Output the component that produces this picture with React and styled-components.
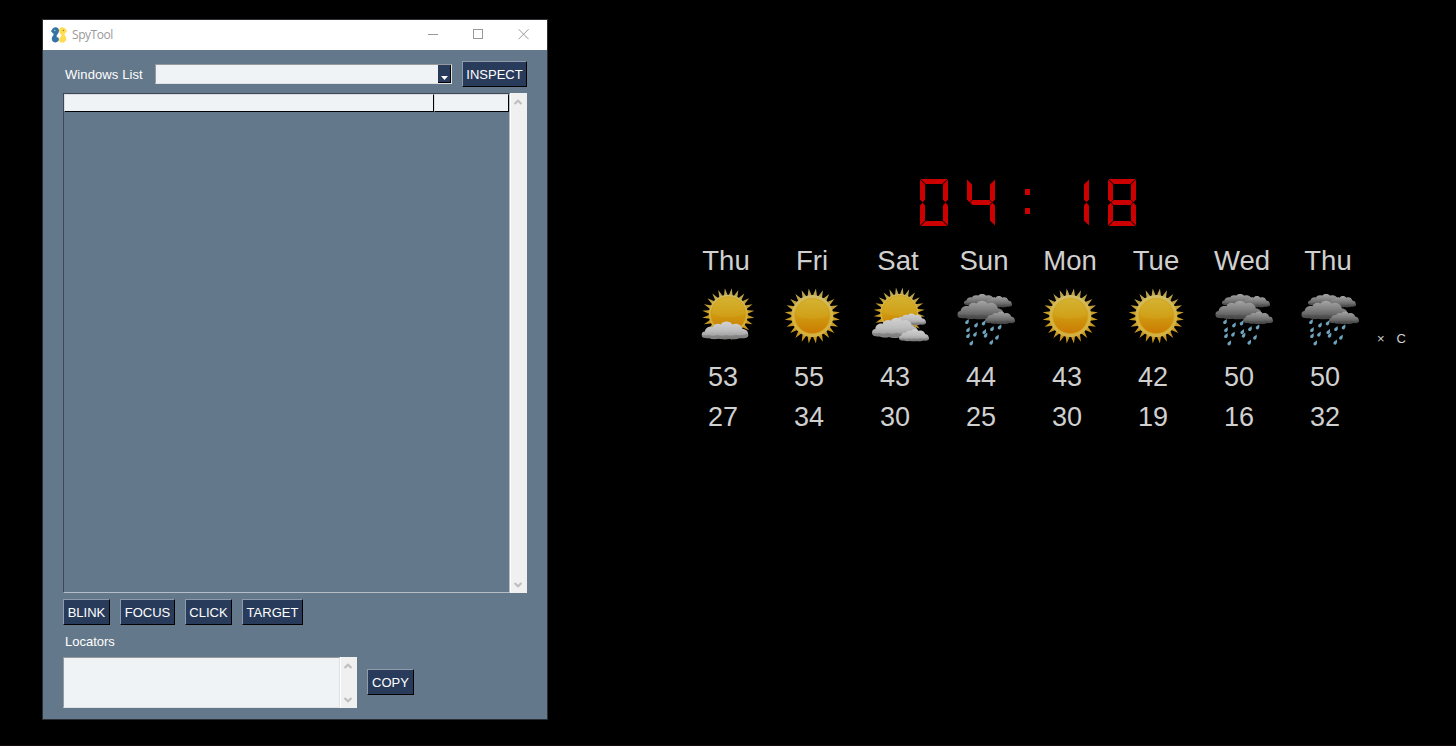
import React from "react";
import styled, { createGlobalStyle } from "styled-components";

const Global = createGlobalStyle`
  * { box-sizing: border-box; }
  body { margin: 0; background: #000; }
`;

const Desktop = styled.main`
  position: relative;
  width: 1456px;
  height: 746px;
  overflow: hidden;
  background: #000;
  border-bottom: 1px solid #140810;
  font-family: "Liberation Sans", Arial, sans-serif;
  font-size: 13px;
`;

const AppWindow = styled.section`
  position: absolute;
  left: 42px;
  top: 19px;
  width: 506px;
  height: 701px;
  border: 1px solid #2b2f33;
  background: #64788b;
  display: flex;
  flex-direction: column;
`;

const TitleBar = styled.header`
  height: 30px;
  flex: none;
  background: #fff;
  display: flex;
  align-items: center;
  padding-left: 8px;
`;

const Title = styled.span`
  flex: 1;
  margin-left: 5px;
  font-family: "Open Sans", "Noto Sans", sans-serif;
  font-size: 12px;
  line-height: 30px;
  letter-spacing: -0.45px;
  color: #999;
`;

const Controls = styled.div`
  display: flex;
  gap: 34px;
  padding-right: 18px;
`;

const Body = styled.div`
  flex: 1;
  padding: 11px 20px 0;
  display: flex;
  flex-direction: column;
`;

const Row = styled.div`
  display: flex;
  align-items: ${(p) => p.$align || "center"};
  gap: 10px;
  height: ${(p) => p.$h}px;
  margin-top: ${(p) => p.$mt || 0}px;
`;

const Label = styled.label`
  width: ${(p) => (p.$w ? p.$w + "px" : "auto")};
  padding-left: 2px;
  line-height: 15px;
  letter-spacing: ${(p) => p.$track || 0}px;
  color: #fff;
  white-space: nowrap;
`;

const Combo = styled.div`
  width: 297px;
  height: 20px;
  border: 1px solid;
  border-color: #97999c #dfe2e5 #dfe2e5 #97999c;
  background: #eff3f6;
  display: flex;
  justify-content: flex-end;
`;

const ComboArrow = styled.div`
  width: 13px;
  height: 18px;
  background: #283b5b;
  border-right: 1px solid #000;
  border-bottom: 1px solid #000;
  display: flex;
  align-items: flex-end;
  justify-content: center;
  padding-bottom: 2px;
`;

const Button = styled.button`
  width: ${(p) => p.$w}px;
  height: 26px;
  padding: 1px 0 0;
  border: 1px solid;
  border-color: #8f9bad #000 #000 #8f9bad;
  border-radius: 0;
  background: #283b5b;
  color: #fff;
  font: 13px/23px "Liberation Sans", Arial, sans-serif;
  text-align: center;
  white-space: nowrap;
`;

const CopyButton = styled(Button)`
  margin-top: 12px;
`;

const TreeRow = styled.div`
  display: flex;
  height: 500px;
  margin-top: 6px;
  flex: none;
`;

const Tree = styled.div`
  width: 447px;
  border: 1px solid;
  border-color: #3c4856 #b6bdc6 #b6bdc6 #3c4856;
`;

const HeadRow = styled.div`
  display: flex;
  width: 446px;
`;

const HeadCell = styled.div`
  width: ${(p) => p.$w}px;
  height: 18px;
  background: #eff3f6;
  border: 1px solid;
  border-color: #dadde0 #000 #000 #dadde0;
`;

const ScrollBar = styled.div`
  width: 17px;
  flex: none;
  background: #f0f0f0;
  border-left: 1px solid #fff;
  display: flex;
  flex-direction: column;
  justify-content: space-between;
  align-items: center;
  padding: 6px 2px 5px 0;
`;

const Locators = styled.div`
  display: flex;
  width: 294px;
  height: 51px;
`;

const TextArea = styled.div`
  flex: 1;
  background: #eff3f6;
  border: 1px solid;
  border-color: #97999c #dfe2e5 #dfe2e5 #97999c;
`;

const Weather = styled.section`
  position: absolute;
  left: 694px;
  top: 179px;
  color: #d0d0d0;
  display: flex;
  flex-direction: column;
`;

const ClockFace = styled.div`
  margin-left: 226px;
  height: 48px;
  display: flex;
  gap: 19px;
`;

const Forecast = styled.div`
  display: flex;
  gap: 22px;
  margin-top: 18px;
`;

const Day = styled.article`
  width: 64px;
  display: flex;
  flex-direction: column;
  align-items: center;
  font-size: 27px;
`;

const DayName = styled.span`
  font-size: 27.500px;
  line-height: 31px;
`;

const Temp = styled.span`
  height: 40px;
  line-height: 40px;
  padding-right: 6px;
`;

const Units = styled.div`
  display: flex;
  gap: 12px;
  margin: 86px 0 0 -5px;
  height: 15px;
  line-height: 15px;
`;

const Logo = () => (
  <svg width="16" height="16" viewBox="0 0 16 16">
    <path d="M0 4.300C.8 2.600 2 .6 4.300.3 6.300 0 8 1.500 8 3.500 8 6 6.700 6.800 5.800 8.200 5.300 9.300 5.700 10.200 6.500 10.300 8.200 10.700 8.300 13 7.200 14.300 5.500 16 2.500 15.700 1.300 13.700.2 11.700 1 10 2.200 8.600 3 7.500 2.700 6.500 1.800 6.200z" fill="#3673a5" />
    <path d="M16 4.300C15.200 2.600 14 .6 11.700.3 9.700 0 8 1.500 8 3.500 8 6 9.700 6.600 10.300 7.900 10.700 9 10 9.900 9.200 10.500 7.600 11.800 7.800 14 9 15.100 10.800 16.300 13.500 15.500 14.700 13.700 15.800 11.700 15.200 10 14 8.600 13.200 7.500 13.400 6.500 14.200 6.200z" fill="#ffdc50" />
    <circle cx="3.800" cy="3.500" r=".8" fill="#9ecbe8" />
    <circle cx="12.400" cy="3.500" r=".8" fill="#a08a30" />
  </svg>
);

const Chevron = ({ down }) => (
  <svg width="8" height="6" viewBox="0 0 8 6">
    <path d={down ? "M.5 1L4 4.300 7.500 1" : "M.5 5L4 1.700 7.500 5"} fill="none" stroke="#bfbfbf" strokeWidth="2.200" />
  </svg>
);

const SEGMENTS = {
  a: "0.6,0 27.400,0 22.300,5 5.700,5",
  b: "28,0.6 28,20.500 25.500,23.200 23,20.700 23,5.500",
  c: "28,26.500 28,46.400 23,41.500 23,26.300 25.500,23.800",
  d: "0.6,47 27.400,47 22.300,42 5.700,42",
  e: "0,26.500 0,46.400 5,41.500 5,26.300 2.500,23.800",
  f: "0,0.6 0,20.500 2.500,23.200 5,20.700 5,5.500",
  g: "3,23.500 5.600,21 22.400,21 25,23.500 22.400,26 5.600,26",
};
const DIGITS = { 0: "abcdef", 1: "bc", 4: "bcfg", 8: "abcdefg" };

const Digit = ({ value }) => (
  <svg width="28" height="47" viewBox="0 0 28 47" fill="#cc0000">
    {value === ":" ? (
      <>
        <rect x="11" y="10" width="5" height="6" />
        <rect x="11" y="29" width="5" height="6" />
      </>
    ) : (
      DIGITS[value].split("").map((s) => <polygon key={s} points={SEGMENTS[s]} />)
    )}
  </svg>
);

const rays = (cx, cy, r) => {
  const n = 24;
  const step = (2 * Math.PI) / n;
  const point = (a, rad) => `${(cx + rad * Math.sin(a)).toFixed(2)},${(cy - rad * Math.cos(a)).toFixed(2)}`;
  const pts = [];
  for (let i = 0; i < n; i++) {
    const a = step * (i + 0.5);
    pts.push(point(a - step * 0.42, r - 7), point(a, r + 0.8), point(a + step * 0.42, r - 7));
  }
  return pts.join(" ");
};

const Sun = ({ cx, cy, r = 27 }) => (
  <g>
    <polygon points={rays(cx, cy, r)} fill="url(#ray)" />
    <circle cx={cx} cy={cy} r={r - 6} fill="url(#rim)" />
    <circle cx={cx} cy={cy} r="17.600" fill="url(#disc)" stroke="#d2a21c" strokeWidth=".7" />
    <path d={`M${cx - 16.500} ${cy}a16.500 16.500 0 0 1 33 0q-16.500 6-33 0z`} fill="#ddc850" opacity=".15" />
  </g>
);

const Cloud = ({ x, y, w, h, tone = "light" }) => (
  <svg x={x} y={y} width={w} height={h} viewBox="0 0 46 18" preserveAspectRatio="none">
    <path d="M4 16.500C1 16.500 0 15 0 13.300 0 11.500 1.500 10.200 3.300 10.200 3.500 7 7 4.700 11 5.800 12 2.800 16 1.800 19 3.300 21-.3 28-.3 30 3.300 34 1.500 39 3.300 40 7.500c4 .5 5.500 2.500 5.500 4.500 1 1.500.7 3.500-1.500 4.200-3 1-5 .5-7 .5-3 1.500-7 1.500-10 .8-3 .7-7 .7-10-.3-3 .8-7 .5-9-.5-1.500.2-2.500 0-4-.2z" fill={`url(#${tone})`} />
    <path d="M.3 13.300q4 1.200 7 .2 4 1.500 8 0 5 1.500 9 0 5 1.500 9-.2 6 1.500 12-.8.5 3-1.300 3.700-7 1.300-18 1.300-13-.5-22-1-3.400-.6-3.700-3.200z" fill="#333" opacity=".25" />
  </svg>
);

const DROPS = [
  [14.700, 37.700], [23.700, 41], [31.300, 39], [15.700, 45.700], [39.700, 44.700], [47.300, 43], [32, 47.700],
  [15.700, 51.700], [22.700, 50.300], [33.300, 51.300], [44.700, 53.300], [19, 59], [39, 58.300],
];

const ICONS = {
  sunny: <Sun cx={32.300} cy={32} />,
  partly: (
    <>
      <Sun cx={34.300} cy={30.300} r={25.500} />
      <Cloud x="7.500" y="37" w="47" h="18.500" />
    </>
  ),
  cloudy: (
    <>
      <Sun cx={33.300} cy={29} r={25} />
      <Cloud x="29" y="29" w="31" h="12.500" />
      <Cloud x="6" y="33" w="46" h="21" />
      <Cloud x="33" y="44.500" w="30" h="13" />
    </>
  ),
  rain: (
    <>
      <Cloud x="12" y="9.500" w="34" h="12.500" tone="dark" />
      <Cloud x="32" y="11.500" w="28" h="12" tone="dark" />
      <Cloud x="5.300" y="16" w="46.500" h="19.500" tone="dark" />
      <Cloud x="33" y="27" w="30" h="13" tone="dark" />
      {DROPS.map(([x, y]) => (
        <path key={`${x}-${y}`} d={`M${x + 1.900} ${y - 2.700}q.7 3-.5 4.500c-1.100 1.200-3 .5-3-1 0-1.300 2-2 3.500-3.500z`} fill="#6da3bd" />
      ))}
    </>
  ),
};

const Gradient = ({ id, stops }) => (
  <linearGradient id={id} x1="0" y1="0" x2="0" y2="1">
    {stops.map((c, i) => (
      <stop key={c} offset={i / (stops.length - 1)} stopColor={c} />
    ))}
  </linearGradient>
);

const WeatherIcon = ({ kind }) => (
  <svg width="64" height="64" viewBox="0 0 64 64">
    <defs>
      <Gradient id="ray" stops={["#b9a65c", "#c89c26", "#c8951c"]} />
      <Gradient id="rim" stops={["#cfbd68", "#d6b440", "#d3b044"]} />
      <Gradient id="disc" stops={["#d3b02e", "#cf9a10", "#cb7a02"]} />
      <Gradient id="light" stops={["#d2d2d2", "#bdbdbd", "#909090"]} />
      <Gradient id="dark" stops={["#a6a6a6", "#7c7c7c", "#4a4a4a"]} />
    </defs>
    {ICONS[kind]}
  </svg>
);

const IconSlot = styled.div`
  height: 64px;
  margin: 8px 0 9px;
  display: flex;
`;

const DAYS = [
  ["Thu", "partly", 53, 27],
  ["Fri", "sunny", 55, 34],
  ["Sat", "cloudy", 43, 30],
  ["Sun", "rain", 44, 25],
  ["Mon", "sunny", 43, 30],
  ["Tue", "sunny", 42, 19],
  ["Wed", "rain", 50, 16],
  ["Thu", "rain", 50, 32],
];

export default function App() {
  return (
    <Desktop>
      <Global />
      <AppWindow>
        <TitleBar>
          <Logo />
          <Title>SpyTool</Title>
          <Controls>
            <svg width="11" height="12" viewBox="0 0 11 12" stroke="#999"><path d="M0 5.500h10" /></svg>
            <svg width="11" height="12" viewBox="0 0 11 12" stroke="#999" fill="none"><rect x=".5" y=".5" width="9" height="9" /></svg>
            <svg width="11" height="12" viewBox="0 0 11 12" stroke="#999"><path d="M.6.200l10 10M10.600.200l-10 10" /></svg>
          </Controls>
        </TitleBar>
        <Body>
          <Row $h={26}>
            <Label $w={82} $track={0.1}>Windows List</Label>
            <Combo>
              <ComboArrow>
                <svg width="7" height="4" viewBox="0 0 7 4"><path d="M0 0h7L3.500 4z" fill="#fff" /></svg>
              </ComboArrow>
            </Combo>
            <Button $w={65}>INSPECT</Button>
          </Row>
          <TreeRow>
            <Tree>
              <HeadRow>
                <HeadCell $w={370} />
                <HeadCell $w={75} />
              </HeadRow>
            </Tree>
            <ScrollBar>
              <Chevron />
              <Chevron down />
            </ScrollBar>
          </TreeRow>
          <Row $h={26} $mt={6}>
            <Button $w={47}>BLINK</Button>
            <Button $w={55}>FOCUS</Button>
            <Button $w={47}>CLICK</Button>
            <Button $w={61}>TARGET</Button>
          </Row>
          <Row $h={15} $mt={9}>
            <Label>Locators</Label>
          </Row>
          <Row $h={51} $mt={8} $align="flex-start">
            <Locators>
              <TextArea />
              <ScrollBar>
                <Chevron />
                <Chevron down />
              </ScrollBar>
            </Locators>
            <CopyButton $w={47}>COPY</CopyButton>
          </Row>
        </Body>
      </AppWindow>
      <Weather>
        <ClockFace>
          {["0", "4", ":", "1", "8"].map((d) => (
            <Digit key={d} value={d} />
          ))}
        </ClockFace>
        <Forecast>
          {DAYS.map(([name, kind, high, low], i) => (
            <Day key={i}>
              <DayName>{name}</DayName>
              <IconSlot>
                <WeatherIcon kind={kind} />
              </IconSlot>
              <Temp>{high}</Temp>
              <Temp>{low}</Temp>
            </Day>
          ))}
          <Units>
            <span>×</span>
            <span>C</span>
          </Units>
        </Forecast>
      </Weather>
    </Desktop>
  );
}
